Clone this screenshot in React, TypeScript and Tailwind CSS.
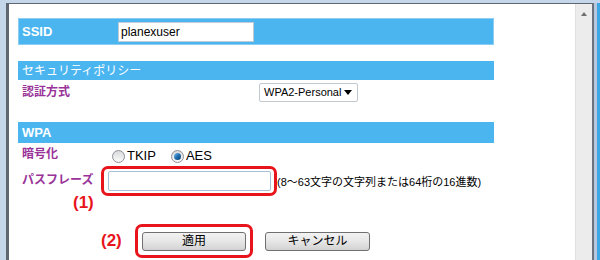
import React from "react";

const font = { fontFamily: '"Liberation Sans", "Noto Sans CJK JP", sans-serif' };

function Radio({ checked }: { checked?: boolean }) {
  return (
    <span className="w-[13px] h-[13px] rounded-full border border-[#8c8f94] bg-gradient-to-b from-[#d9dadc] to-[#fbfbfb] flex items-center justify-center">
      {checked && (
        <span className="w-[7px] h-[7px] rounded-full bg-gradient-to-br from-[#7cc0ec] via-[#1f6fb0] to-[#0c3f6e]" />
      )}
    </span>
  );
}

function Button({ label, w }: { label: string; w: string }) {
  return (
    <div
      className={`${w} h-[19px] border border-[#707070] rounded-[3px] bg-gradient-to-b from-[#f3f3f3] via-[#e6e6e6] to-[#d2d2d2] flex items-center justify-center text-[12px] text-black leading-none`}
    >
      {label}
    </div>
  );
}

export default function App() {
  return (
    <div className="w-[600px] h-[260px] overflow-hidden flex bg-[#c6d6ea] pl-[6px] pt-[3px]" style={font}>
      <div className="flex-1 flex border-l-[3px] border-t border-[#5f6672]">
        <div className="flex-1 bg-white pl-[9px] flex flex-col">
          {/* SSID */}
          <div className="mt-[14px] w-[476px] h-[27px] bg-[#4bb5f0] border border-[#8dcdf3] flex items-center pl-[3px]">
            <div className="w-[96px] text-white font-bold text-[13px]">SSID</div>
            <div className="w-[136px] h-[20px] bg-white border border-[#c3ccd6] flex items-center pl-[2px] text-[12px] text-black">
              planexuser
            </div>
          </div>
          {/* Security */}
          <div className="mt-[16px] w-[476px] h-[19px] bg-[#4bb5f0] flex items-center pl-[4px] text-white text-[12px]">
            セキュリティポリシー
          </div>
          <div className="h-[42px] flex items-start pl-[4px]">
            <div className="w-[237px] mt-[4px] text-[12px] font-bold text-[#993399] leading-[16px]">認証方式</div>
            <div className="mt-[3px] w-[99px] h-[19px] border border-[#c0c8d0] rounded-[2px] bg-white flex items-center justify-between pl-[4px] pr-[5px] text-[11px] text-black whitespace-nowrap">
              <span>WPA2-Personal</span>
              <span className="w-0 h-0 border-l-[4px] border-r-[4px] border-t-[5px] border-l-transparent border-r-transparent border-t-black" />
            </div>
          </div>
          {/* WPA */}
          <div className="w-[476px] h-[21px] bg-[#4bb5f0] flex items-center pl-[4px] text-white font-bold text-[13px]">
            WPA
          </div>
          <div className="h-[23px] flex items-center pl-[4px]">
            <div className="w-[90px] text-[12px] font-bold text-[#993399] leading-[16px] -mt-[1px]">暗号化</div>
            <div className="flex items-center mt-[3px]">
              <Radio />
              <span className="ml-[2px] text-[13px] text-black">TKIP</span>
              <span className="ml-[15px]">
                <Radio checked />
              </span>
              <span className="ml-[2px] text-[13px] text-black">AES</span>
            </div>
          </div>
          {/* Passphrase */}
          <div className="h-[30px] flex items-center pl-[4px]">
            <div className="w-[79px] text-[12px] font-bold text-[#993399] leading-[16px] -mt-[3px]">パスフレーズ</div>
            <div className="h-[30px] border-[3px] border-[#e8141c] rounded-[7px] pl-[4px] pr-[3px] flex items-center">
              <div className="w-[163px] h-[20px] bg-white border border-[#a9bfd6] rounded-[2px]" />
            </div>
            <div className="text-[11px] text-black mt-[3px] whitespace-nowrap">(8～63文字の文字列または64桁の16進数)</div>
          </div>
          <div className="h-[28px] pl-[55px]">
            <div className="-mt-[3px] text-[17px] font-bold text-[#e8141c] leading-[20px]">(1)</div>
          </div>
          {/* Buttons */}
          <div className="h-[34px] flex items-center pl-[83px]">
            <div className="w-[34px] text-[17px] font-bold text-[#e8141c] leading-[20px]">(2)</div>
            <div className="h-[34px] border-[3px] border-[#e8141c] rounded-[7px] px-[4px] flex items-center">
              <Button label="適用" w="w-[104px]" />
            </div>
            <div className="ml-[12px]">
              <Button label="キャンセル" w="w-[105px]" />
            </div>
          </div>
        </div>
        {/* scrollbar */}
        <div className="w-[17px] bg-[#ececec] border-l border-[#e0e0e0] flex justify-center pt-[8px]">
          <span className="w-0 h-0 border-l-[3px] border-r-[3px] border-b-[4px] border-l-transparent border-r-transparent border-b-[#707070]" />
        </div>
      </div>
      <div className="w-[8px] flex">
        <div className="w-[2px] bg-[#6b7280]" />
        <div className="w-[3px] bg-[#b7c8de]" />
        <div className="w-[3px] bg-[#3ca7e4]" />
      </div>
    </div>
  );
}
